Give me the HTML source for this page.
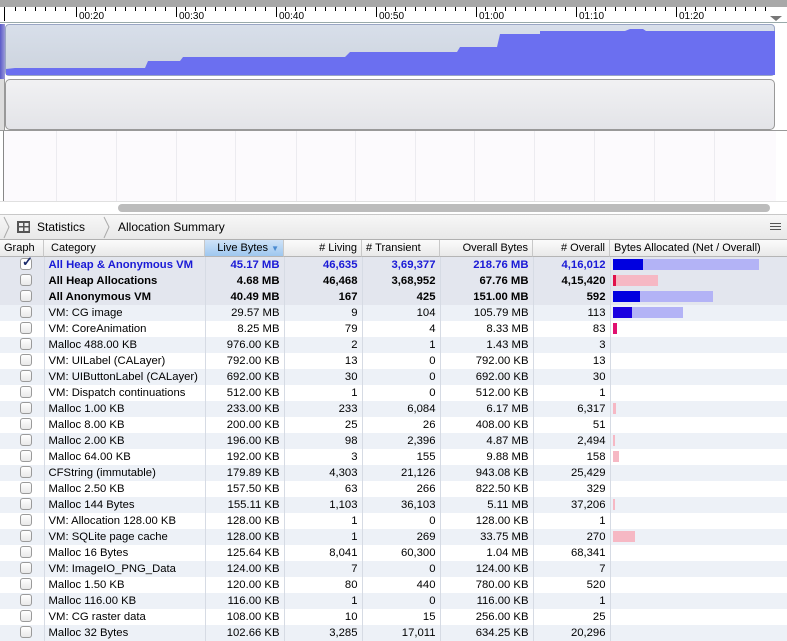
<!DOCTYPE html>
<html><head><meta charset="utf-8"><style>
*{margin:0;padding:0;box-sizing:border-box}
body{width:787px;height:633px;overflow:hidden;background:#fff;font-family:"Liberation Sans",sans-serif;font-size:11px;color:#000;position:relative}
.abs{position:absolute}
table{border-collapse:collapse;table-layout:fixed;position:absolute;left:0;top:257px;width:787px}
td{height:16px;padding:0 4px;white-space:nowrap;overflow:hidden;border-right:1px solid #d6dbe4;line-height:16px;font-size:11.3px}
td.n{text-align:right}
tr.s td{background:#edf1f7}
tr.t td{background:#e3e6ee;font-weight:bold}
tr.b td{color:#1a1ad6}
.cb{display:inline-block;width:12px;height:12px;border:1px solid #9a9a9a;border-radius:3px;background:linear-gradient(#fff,#e8e8e8);vertical-align:middle;margin-left:20px;margin-top:-2px}
.hd{position:absolute;top:240px;height:17px;line-height:16px;border-right:1px solid #c8c8c8;padding:0 4px;white-space:nowrap;background:linear-gradient(#fbfbfb,#e9e9e9);border-bottom:1px solid #b5b5b5}
.bar{position:absolute;height:11px}
</style></head><body>
<!-- ruler -->
<div class="abs" style="left:0;top:0;width:787px;height:7px;background:#a8a8a8"></div>
<div class="abs" style="left:0;top:7px;width:787px;height:16px;background:#fff;border-bottom:1px solid #9aa"></div>
<svg class="abs" style="left:0;top:7px" width="787" height="16">
<g stroke="#000" stroke-width="1">
<path d="M15.5 0v4M25.5 0v4M35.5 0v4M45.5 0v4M55.5 0v4M65.5 0v4M85.5 0v4M95.5 0v4M105.5 0v4M115.5 0v4M125.5 0v4M135.5 0v4M145.5 0v4M155.5 0v4M165.5 0v4M185.5 0v4M195.5 0v4M205.5 0v4M215.5 0v4M225.5 0v4M235.5 0v4M245.5 0v4M255.5 0v4M265.5 0v4M285.5 0v4M295.5 0v4M305.5 0v4M315.5 0v4M325.5 0v4M335.5 0v4M345.5 0v4M355.5 0v4M365.5 0v4M385.5 0v4M395.5 0v4M405.5 0v4M415.5 0v4M425.5 0v4M435.5 0v4M445.5 0v4M455.5 0v4M465.5 0v4M485.5 0v4M495.5 0v4M505.5 0v4M515.5 0v4M525.5 0v4M535.5 0v4M545.5 0v4M555.5 0v4M565.5 0v4M585.5 0v4M595.5 0v4M605.5 0v4M615.5 0v4M625.5 0v4M635.5 0v4M645.5 0v4M655.5 0v4M665.5 0v4M685.5 0v4M695.5 0v4M705.5 0v4M715.5 0v4M725.5 0v4M735.5 0v4M745.5 0v4M755.5 0v4M765.5 0v4"/>
<path d="M4.5 0v14M76.5 0v10M176.5 0v10M276.5 0v10M376.5 0v10M476.5 0v10M576.5 0v10M676.5 0v10"/></g>
<g font-family="Liberation Sans" font-size="10" fill="#000"><text x="79" y="12">00:20</text><text x="179" y="12">00:30</text><text x="279" y="12">00:40</text><text x="379" y="12">00:50</text><text x="479" y="12">01:00</text><text x="579" y="12">01:10</text><text x="679" y="12">01:20</text></g>
<path d="M770 9h12l-6 5z" fill="#777"/>
</svg>
<!-- track bg -->
<div class="abs" style="left:0;top:24px;width:787px;height:190px;background:#fff"></div>
<div class="abs" style="left:0;top:24px;width:5px;height:106px;background:linear-gradient(90deg,#5a5ac8,#9a9ad8)"></div>
<div class="abs" style="left:5px;top:24px;width:770px;height:52px;border:1px solid #9aa6c4;border-radius:4px;background:linear-gradient(#d8dfea,#ccd3dd)"></div>
<svg class="abs" style="left:5px;top:24px" width="771" height="52"><path d="M1 51V45L10 44H140V44L143 37H175L178 33H340L345 28H452L455 23H492L495 10H535V7H620L625 5H638L641 7H770V51Z" fill="#6b6ff0"/></svg>
<div class="abs" style="left:5px;top:79px;width:770px;height:51px;border:1px solid #999;border-radius:5px;background:linear-gradient(#f1f1f3,#e3e4e8)"></div>
<div class="abs" style="left:0;top:79px;width:5px;height:51px;background:#ddd;border-right:1px solid #999"></div>
<div class="abs" style="left:0;top:130px;width:787px;height:1px;background:#999"></div>
<div class="abs" style="left:3px;top:131px;width:773px;height:70px;background:#fcfafd;border-left:1px solid #888"></div>
<svg class="abs" style="left:0;top:131px" width="787" height="70"><g stroke="#ecebf0"><path d="M56.5 0v70M116.5 0v70M176.5 0v70M235.5 0v70M296.5 0v70M355.5 0v70M415.5 0v70M474.5 0v70M534.5 0v70M594.5 0v70M654.5 0v70M714.5 0v70"/></g></svg>
<div class="abs" style="left:0;top:201px;width:787px;height:13px;background:#fff;border-top:1px solid #e0e0e0"></div>
<div class="abs" style="left:118px;top:204px;width:652px;height:8px;border-radius:4px;background:#bcbcbc"></div>
<!-- breadcrumb -->
<div class="abs" style="left:0;top:214px;width:787px;height:26px;background:linear-gradient(#f7f7f7,#e8e8e8);border-top:1px solid #c8c8c8;border-bottom:1px solid #b0b0b0"></div>
<svg class="abs" style="left:0;top:215px" width="120" height="25"><path d="M4 2l5 10-5 11M104 2l5 10-5 11" stroke="#aaa" fill="none"/>
<rect x="17" y="6" width="13" height="12" fill="#555"/><path d="M19 8h4v3h-4zM24.5 8h4v3h-4zM19 12.5h4v3.5h-4zM24.5 12.5h4v3.5h-4z" fill="#eee"/></svg>
<div class="abs" style="left:37px;top:220px;font-size:12px">Statistics</div>
<div class="abs" style="top:220px;font-size:12px;left:118px">Allocation Summary</div>
<div class="abs" style="left:770px;top:226px;width:11px;height:1px;background:#555;box-shadow:0 3px #555,0 -3px #555"></div>
<!-- header -->
<div class="hd" style="left:0;width:44px">Graph</div>
<div class="hd" style="left:44px;width:161px">&nbsp;Category</div>
<div class="hd" style="left:205px;width:79px;text-align:right;background:linear-gradient(#cfe3f8,#9ec7ef)">Live Bytes <span style="color:#4a8ad0;font-size:8px">▼</span></div>
<div class="hd" style="left:284px;width:78px;text-align:right">#&nbsp;Living</div>
<div class="hd" style="left:362px;width:78px;text-align:left">#&nbsp;Transient</div>
<div class="hd" style="left:440px;width:93px;text-align:right">Overall Bytes</div>
<div class="hd" style="left:533px;width:77px;text-align:right">#&nbsp;Overall</div>
<div class="hd" style="left:610px;width:177px;border-right:0">Bytes Allocated (Net / Overall)</div>
<table>
<colgroup><col style="width:44px"><col style="width:161px"><col style="width:79px"><col style="width:78px"><col style="width:78px"><col style="width:93px"><col style="width:77px"><col style="width:177px"></colgroup>
<tr class="t b"><td style="padding:0"><span class="cb" style="background:#fff;position:relative"><span style="position:absolute;left:1px;top:-5px;color:#1a2a6a;font-size:13px;font-weight:bold">✓</span></span></td><td>All Heap &amp; Anonymous VM</td><td class="n">45.17 MB</td><td class="n">46,635</td><td class="n">3,69,377</td><td class="n">218.76 MB</td><td class="n">4,16,012</td><td></td></tr>
<tr class="t"><td style="padding:0"><span class="cb"></span></td><td>All Heap Allocations</td><td class="n">4.68 MB</td><td class="n">46,468</td><td class="n">3,68,952</td><td class="n">67.76 MB</td><td class="n">4,15,420</td><td></td></tr>
<tr class="t"><td style="padding:0"><span class="cb"></span></td><td>All Anonymous VM</td><td class="n">40.49 MB</td><td class="n">167</td><td class="n">425</td><td class="n">151.00 MB</td><td class="n">592</td><td></td></tr>
<tr class="s"><td style="padding:0"><span class="cb"></span></td><td>VM: CG image</td><td class="n">29.57 MB</td><td class="n">9</td><td class="n">104</td><td class="n">105.79 MB</td><td class="n">113</td><td></td></tr>
<tr><td style="padding:0"><span class="cb"></span></td><td>VM: CoreAnimation</td><td class="n">8.25 MB</td><td class="n">79</td><td class="n">4</td><td class="n">8.33 MB</td><td class="n">83</td><td></td></tr>
<tr class="s"><td style="padding:0"><span class="cb"></span></td><td>Malloc 488.00 KB</td><td class="n">976.00 KB</td><td class="n">2</td><td class="n">1</td><td class="n">1.43 MB</td><td class="n">3</td><td></td></tr>
<tr><td style="padding:0"><span class="cb"></span></td><td>VM: UILabel (CALayer)</td><td class="n">792.00 KB</td><td class="n">13</td><td class="n">0</td><td class="n">792.00 KB</td><td class="n">13</td><td></td></tr>
<tr class="s"><td style="padding:0"><span class="cb"></span></td><td>VM: UIButtonLabel (CALayer)</td><td class="n">692.00 KB</td><td class="n">30</td><td class="n">0</td><td class="n">692.00 KB</td><td class="n">30</td><td></td></tr>
<tr><td style="padding:0"><span class="cb"></span></td><td>VM: Dispatch continuations</td><td class="n">512.00 KB</td><td class="n">1</td><td class="n">0</td><td class="n">512.00 KB</td><td class="n">1</td><td></td></tr>
<tr class="s"><td style="padding:0"><span class="cb"></span></td><td>Malloc 1.00 KB</td><td class="n">233.00 KB</td><td class="n">233</td><td class="n">6,084</td><td class="n">6.17 MB</td><td class="n">6,317</td><td></td></tr>
<tr><td style="padding:0"><span class="cb"></span></td><td>Malloc 8.00 KB</td><td class="n">200.00 KB</td><td class="n">25</td><td class="n">26</td><td class="n">408.00 KB</td><td class="n">51</td><td></td></tr>
<tr class="s"><td style="padding:0"><span class="cb"></span></td><td>Malloc 2.00 KB</td><td class="n">196.00 KB</td><td class="n">98</td><td class="n">2,396</td><td class="n">4.87 MB</td><td class="n">2,494</td><td></td></tr>
<tr><td style="padding:0"><span class="cb"></span></td><td>Malloc 64.00 KB</td><td class="n">192.00 KB</td><td class="n">3</td><td class="n">155</td><td class="n">9.88 MB</td><td class="n">158</td><td></td></tr>
<tr class="s"><td style="padding:0"><span class="cb"></span></td><td>CFString (immutable)</td><td class="n">179.89 KB</td><td class="n">4,303</td><td class="n">21,126</td><td class="n">943.08 KB</td><td class="n">25,429</td><td></td></tr>
<tr><td style="padding:0"><span class="cb"></span></td><td>Malloc 2.50 KB</td><td class="n">157.50 KB</td><td class="n">63</td><td class="n">266</td><td class="n">822.50 KB</td><td class="n">329</td><td></td></tr>
<tr class="s"><td style="padding:0"><span class="cb"></span></td><td>Malloc 144 Bytes</td><td class="n">155.11 KB</td><td class="n">1,103</td><td class="n">36,103</td><td class="n">5.11 MB</td><td class="n">37,206</td><td></td></tr>
<tr><td style="padding:0"><span class="cb"></span></td><td>VM: Allocation 128.00 KB</td><td class="n">128.00 KB</td><td class="n">1</td><td class="n">0</td><td class="n">128.00 KB</td><td class="n">1</td><td></td></tr>
<tr class="s"><td style="padding:0"><span class="cb"></span></td><td>VM: SQLite page cache</td><td class="n">128.00 KB</td><td class="n">1</td><td class="n">269</td><td class="n">33.75 MB</td><td class="n">270</td><td></td></tr>
<tr><td style="padding:0"><span class="cb"></span></td><td>Malloc 16 Bytes</td><td class="n">125.64 KB</td><td class="n">8,041</td><td class="n">60,300</td><td class="n">1.04 MB</td><td class="n">68,341</td><td></td></tr>
<tr class="s"><td style="padding:0"><span class="cb"></span></td><td>VM: ImageIO_PNG_Data</td><td class="n">124.00 KB</td><td class="n">7</td><td class="n">0</td><td class="n">124.00 KB</td><td class="n">7</td><td></td></tr>
<tr><td style="padding:0"><span class="cb"></span></td><td>Malloc 1.50 KB</td><td class="n">120.00 KB</td><td class="n">80</td><td class="n">440</td><td class="n">780.00 KB</td><td class="n">520</td><td></td></tr>
<tr class="s"><td style="padding:0"><span class="cb"></span></td><td>Malloc 116.00 KB</td><td class="n">116.00 KB</td><td class="n">1</td><td class="n">0</td><td class="n">116.00 KB</td><td class="n">1</td><td></td></tr>
<tr><td style="padding:0"><span class="cb"></span></td><td>VM: CG raster data</td><td class="n">108.00 KB</td><td class="n">10</td><td class="n">15</td><td class="n">256.00 KB</td><td class="n">25</td><td></td></tr>
<tr class="s"><td style="padding:0"><span class="cb"></span></td><td>Malloc 32 Bytes</td><td class="n">102.66 KB</td><td class="n">3,285</td><td class="n">17,011</td><td class="n">634.25 KB</td><td class="n">20,296</td><td></td></tr>
</table>
<!-- bars -->
<div class="bar" style="left:613px;top:259px;width:146px;background:#b3b3f6"></div>
<div class="bar" style="left:613px;top:259px;width:30px;background:#0000e0"></div>
<div class="bar" style="left:613px;top:275px;width:45px;background:#f6b8c4"></div>
<div class="bar" style="left:613px;top:275px;width:3px;background:#e0104a"></div>
<div class="bar" style="left:613px;top:291px;width:100px;background:#b3b3f6"></div>
<div class="bar" style="left:613px;top:291px;width:27px;background:#0000e0"></div>
<div class="bar" style="left:613px;top:307px;width:70px;background:#b3b3f6"></div>
<div class="bar" style="left:613px;top:307px;width:19px;background:#1a00e0"></div>
<div class="bar" style="left:613px;top:323px;width:4px;background:#e01070"></div>
<div class="bar" style="left:613px;top:403px;width:3px;background:#f6b8c4"></div>
<div class="bar" style="left:613px;top:435px;width:2px;background:#f6b8c4"></div>
<div class="bar" style="left:613px;top:451px;width:6px;background:#f6b8c4"></div>
<div class="bar" style="left:613px;top:499px;width:2px;background:#f6b8c4"></div>
<div class="bar" style="left:613px;top:531px;width:22px;background:#f6b8c4"></div>
</body></html>
